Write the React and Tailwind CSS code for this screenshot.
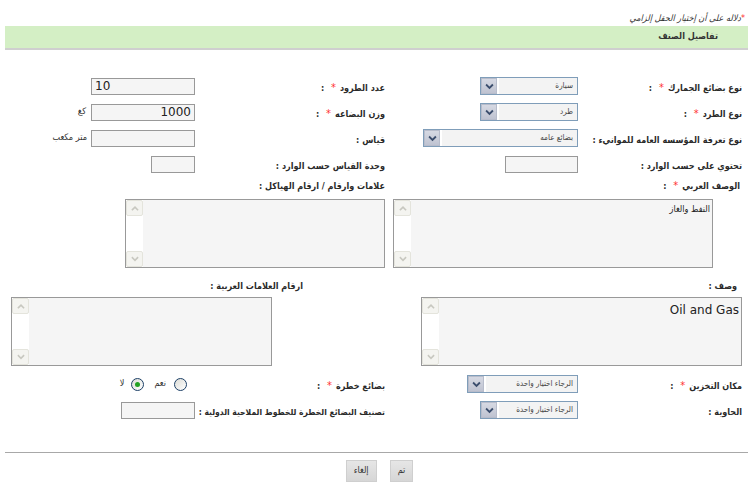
import React from 'react';

const font = { fontFamily: '"DejaVu Sans", Tahoma, sans-serif' };
const condensed = { fontFamily: '"DejaVu Sans Condensed", "DejaVu Sans", Tahoma, sans-serif' };

function Label({ children, req, small }) {
  return (
    <span className={`whitespace-nowrap font-bold text-[#2a2a2a] ${small ? 'text-[8.5px]' : 'text-[9px]'}`} style={condensed}>
      {children}
      {req && <span className="mx-[4px] text-[11px] font-normal text-[#f33]">*</span>}
      {' :'}
    </span>
  );
}

function Chevron({ className, up }) {
  return (
    <svg viewBox="0 0 12 12" className={className} fill="none">
      <path d={up ? 'M3 8 L6 5 L9 8' : 'M3 4.5 L6 7.5 L9 4.5'} stroke="currentColor" strokeWidth="2" strokeLinecap="square" />
    </svg>
  );
}

function Select({ value, width }) {
  return (
    <div className={`flex h-[18px] items-stretch border border-[#7f9db9] bg-white ${width}`}>
      <div className="ml-[2px] flex flex-1 items-center bg-[#f3f3f3] pr-[4px] text-[8px] text-[#444]" style={condensed}>{value}</div>
      <div className="flex w-[16px] items-center justify-center border border-[#b7bccb] bg-gradient-to-b from-[#d6d9e3] to-[#bfc3d1] text-[#3b4d6d]">
        <Chevron className="h-[11px] w-[11px]" />
      </div>
    </div>
  );
}

function Input({ value, width, ltr, right }) {
  return (
    <div
      dir={ltr ? 'ltr' : 'rtl'}
      className={`flex h-[17px] items-center border border-[#999] bg-[#f5f5f5] px-[3px] text-[12px] text-[#222] ${width} ${right ? 'justify-end' : ''}`}
    >
      {value}
    </div>
  );
}

function TextArea({ value, width, ltr }) {
  return (
    <div className={`flex h-[69px] border border-[#999] bg-[#f5f5f5] ${width}`}>
      <div className={`flex-1 px-[2px] pt-[3px] ${ltr ? 'text-[12px] text-[#222]' : 'text-[9px] text-[#222]'}`} style={ltr ? font : condensed}>
        {value}
      </div>
      <div className="flex w-[17px] flex-col justify-between bg-white">
        <div className="flex h-[16px] items-center justify-center rounded-[2px] border border-[#e4e4dc] bg-[#f4f4f0] text-[#c8c8c0]">
          <Chevron up className="h-[10px] w-[10px]" />
        </div>
        <div className="flex h-[16px] items-center justify-center rounded-[2px] border border-[#e4e4dc] bg-[#f4f4f0] text-[#c8c8c0]">
          <Chevron className="h-[10px] w-[10px]" />
        </div>
      </div>
    </div>
  );
}

function Row({ rightLabel, rightCtl, leftLabel, leftCtl }) {
  return (
    <div className="flex h-[26px] items-center">
      <div className="flex w-[363px] items-center">
        <div className="w-[175px] pr-[11px]">{rightLabel}</div>
        <div className="flex items-center">{rightCtl}</div>
      </div>
      <div className="flex flex-1 items-center">
        <div className="w-[195px] pr-[5px]">{leftLabel}</div>
        <div className="flex items-center">{leftCtl}</div>
      </div>
    </div>
  );
}

function Radio({ checked }) {
  return (
    <span className="flex h-[13px] w-[13px] items-center justify-center rounded-full border border-[#1c3f66] bg-gradient-to-br from-[#dcdcd6] to-white">
      {checked && <span className="h-[5px] w-[5px] rounded-full bg-[#21a121]" />}
    </span>
  );
}

function Button({ children }) {
  return (
    <button className="flex h-[22px] items-center justify-center border border-[#cfcfcf] bg-gradient-to-b from-[#e6e6e6] to-[#d6d6d6] px-[7px] text-[9px] text-[#333]" style={condensed}>
      {children}
    </button>
  );
}

export default function App() {
  return (
    <div dir="rtl" className="min-h-[489px] w-[753px] bg-white" style={font}>
      {/* note */}
      <div className="pr-[8px] pt-[11px] text-[9px] italic leading-[15px] text-[#333]" style={condensed}>
        <span className="text-[#f33]">*</span>دلاله على أن إختيار الحقل إلزامي
      </div>

      {/* section header */}
      <div className="mx-[5px] flex h-[22px] items-center bg-[#d4efc5] pr-[30px] text-[9px] font-bold text-[#333]" style={condensed}>
        تفاصيل الصنف
      </div>
      <div className="mx-[5px] h-[2px] bg-[#cfcfcf]" />

      <div className="mt-[23px]">
        <Row
          rightLabel={<Label req>نوع بضائع الجمارك</Label>}
          rightCtl={<Select value="سيارة" width="w-[98px]" />}
          leftLabel={<Label req>عدد الطرود</Label>}
          leftCtl={<Input value="10" width="w-[104px]" ltr />}
        />
        <Row
          rightLabel={<Label req>نوع الطرد</Label>}
          rightCtl={<Select value="طرد" width="w-[98px]" />}
          leftLabel={<Label req>وزن البضاعه</Label>}
          leftCtl={
            <>
              <Input value="1000" width="w-[104px]" ltr right />
              <span className="mr-[5px] text-[9px] text-[#333]" style={condensed}>كغ</span>
            </>
          }
        />
        <Row
          rightLabel={<Label>نوع تعرفة المؤسسه العامه للموانيء</Label>}
          rightCtl={<Select value="بضائع عامه" width="w-[155px]" />}
          leftLabel={<Label>قياس</Label>}
          leftCtl={
            <>
              <Input value="" width="w-[104px]" />
              <span className="mr-[4px] text-[9px] text-[#333]" style={condensed}>متر مكعب</span>
            </>
          }
        />
        <Row
          rightLabel={<Label>تحتوي على حسب الوارد</Label>}
          rightCtl={<Input value="" width="w-[73px]" />}
          leftLabel={<Label>وحدة القياس حسب الوارد</Label>}
          leftCtl={<Input value="" width="w-[44px]" />}
        />
      </div>

      {/* arabic description */}
      <div className="flex h-[14px] items-center">
        <div className="w-[363px] pr-[13px]"><Label req>الوصف العربي</Label></div>
        <div className="flex-1 pr-[5px]"><Label>علامات وارقام / ارقام الهياكل</Label></div>
      </div>
      <div className="mt-[8px] flex">
        <div className="w-[363px] pr-[40px]"><TextArea value="النفط والغاز" width="w-[320px]" /></div>
        <div className="flex-1 pr-[5px]"><TextArea value="" width="w-[260px]" /></div>
      </div>

      {/* description */}
      <div className="mt-[9px] flex h-[14px] items-center">
        <div className="w-[363px] pr-[16px]"><Label>وصف</Label></div>
        <div className="flex-1 pr-[87px]"><Label>ارقام العلامات العربية</Label></div>
      </div>
      <div className="mt-[6px] flex">
        <div className="w-[363px] pr-[11px]">
          <TextArea value={<div dir="ltr" className="text-right">Oil and Gas</div>} width="w-[321px]" ltr />
        </div>
        <div className="flex-1 pr-[118px]"><TextArea value="" width="w-[261px]" /></div>
      </div>

      <div className="mt-[5px]">
        <Row
          rightLabel={<Label req>مكان التخزين</Label>}
          rightCtl={<Select value="الرجاء اختيار واحدة" width="w-[111px]" />}
          leftLabel={<Label req>بضائع خطرة</Label>}
          leftCtl={
            <div className="mr-[8px] flex items-center text-[9px] text-[#333]" style={condensed}>
              <Radio />
              <span className="ml-[10px] mr-[8px]">نعم</span>
              <Radio checked />
              <span className="mr-[7px]">لا</span>
            </div>
          }
        />
        <Row
          rightLabel={<Label>الحاوية</Label>}
          rightCtl={<Select value="الرجاء اختيار واحدة" width="w-[98px]" />}
          leftLabel={<Label small>تصنيف البضائع الخطرة للخطوط الملاحية الدولية</Label>}
          leftCtl={<Input value="" width="w-[74px]" />}
        />
      </div>

      <div className="mx-[5px] mt-[29px] h-px bg-[#a8a8a8]" />
      <div className="mt-[7px] flex justify-center gap-[13px] pl-[6px]">
        <Button>تم</Button>
        <Button>إلغاء</Button>
      </div>
    </div>
  );
}
